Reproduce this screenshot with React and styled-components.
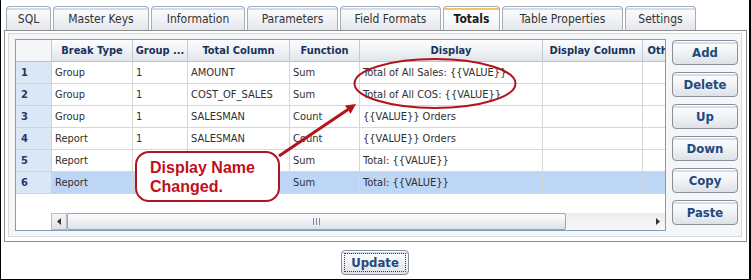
import React from 'react';
import styled, { createGlobalStyle } from 'styled-components';

const UI_FONT = `"DejaVu Sans Condensed", "DejaVu Sans", sans-serif`;

const GlobalStyle = createGlobalStyle`
  html, body {
    margin: 0;
    padding: 0;
    background: #fff;
  }
  body {
    font-family: ${UI_FONT};
    font-stretch: condensed;
  }
  * {
    box-sizing: border-box;
  }
`;

const Frame = styled.div`
  position: relative;
  width: 751px;
  height: 280px;
  border-left: 1px solid #000;
  border-right: 2px solid #000;
  border-bottom: 1px solid #000;
  display: flex;
  flex-direction: column;
  overflow: hidden;
`;

const TabBar = styled.div`
  display: flex;
  gap: 2px;
  height: 30px;
  padding: 6px 0 0 5px;
`;

const Tab = styled.div`
  width: ${(p) => p.$w}px;
  height: 24px;
  border: 1px solid #a3acb8;
  border-bottom: none;
  border-radius: 4px 4px 0 0;
  background: ${(p) =>
    p.$active
      ? 'linear-gradient(#fff 0 1px, #f3c564 1px 3px, #fefefe 3px, #fafbfc 50%, #eef0f3 100%)'
      : 'linear-gradient(#fff 0 1px, #d2ddea 1px 3px, #fafbfc 3px, #f1f3f6 50%, #e3e6eb 100%)'};
  display: flex;
  align-items: center;
  justify-content: center;
  font-size: 12px;
  font-weight: ${(p) => (p.$active ? 700 : 400)};
  color: ${(p) => (p.$active ? '#1a1a1a' : '#333')};
  white-space: nowrap;
`;

const Panel = styled.div`
  height: 212px;
  margin: 0 2px 0 3px;
  border: 1px solid #8e8e8e;
  padding: 2px 4px 4px 3px;
  background: #fff;
`;

const Inner = styled.div`
  height: 100%;
  border: 1px solid #d6d8db;
  background: #f5f6f8;
  padding: 5px 3px 5px 6px;
  display: flex;
  gap: 6px;
`;

const GridBox = styled.div`
  width: 651px;
  border: 1px solid #7f9db9;
  background: #fff;
  display: flex;
  flex-direction: column;
  overflow: hidden;
`;

const Row = styled.div`
  display: grid;
  grid-template-columns: 36px 81px 55px 102px 70px 183px 100px 42px;
  height: 22px;
  flex: none;
  background: ${(p) => (p.$selected ? '#bed6f6' : '#fff')};
`;

const HeadCell = styled.div`
  border-right: 1px solid #c4cad3;
  border-bottom: 1px solid #b9c0ca;
  background: ${(p) =>
    p.$corner ? '#f4f6f9' : 'linear-gradient(#fdfdfe, #eef1f5 55%, #e0e5eb)'};
  color: #18335d;
  font-size: 11px;
  font-weight: 700;
  line-height: 21px;
  text-align: center;
  white-space: nowrap;
  overflow: hidden;
`;

const NumCell = styled.div`
  border-right: 1px solid #c9d5e4;
  border-bottom: 1px solid #c9d5e4;
  background: #dce7f6;
  color: #1c3a6a;
  font-size: 11px;
  font-weight: 700;
  line-height: 21px;
  padding-left: 5px;
`;

const Cell = styled.div`
  border-right: 1px solid #d6d6d6;
  border-bottom: 1px solid #d6d6d6;
  color: #2f2f2f;
  font-size: 11px;
  line-height: 21px;
  padding-left: 3px;
  white-space: nowrap;
  overflow: hidden;
`;

const Filler = styled.div`
  flex: 1;
`;

const HScroll = styled.div`
  display: flex;
  height: 17px;
  margin-left: 35px;
  flex: none;
  background: linear-gradient(#eceef1, #f6f7f8);
`;

const ScrollArrow = styled.div`
  width: ${(p) => p.$w}px;
  display: flex;
  align-items: center;
  justify-content: center;
  border: ${(p) => (p.$boxed ? '1px solid #b7bdc6' : 'none')};
  background: ${(p) => (p.$boxed ? 'linear-gradient(#f4f5f7, #dfe2e6)' : 'transparent')};
`;

const Thumb = styled.div`
  width: 499px;
  border: 1px solid #9ba4b0;
  border-radius: 2px;
  background: linear-gradient(#fdfdfe, #eef0f3 50%, #dde1e7);
  display: flex;
  align-items: center;
  justify-content: center;
  gap: 2px;
`;

const Grip = styled.span`
  width: 1px;
  height: 7px;
  background: #7e8896;
`;

const Track = styled.div`
  flex: 1;
`;

const SideButtons = styled.div`
  width: 66px;
  display: flex;
  flex-direction: column;
  gap: 7px;
  padding-top: 1px;
`;

const ActionButton = styled.button`
  width: ${(p) => p.$w || 66}px;
  height: 25px;
  padding: 0;
  border: 1px solid #8a9099;
  border-radius: 4px;
  background: linear-gradient(#fff 0 1px, #d5dfeb 1px 3px, #fbfcfd 3px, #f1f3f6 50%, #dde1e7 100%);
  font-family: ${UI_FONT};
  font-stretch: condensed;
  font-size: 13px;
  font-weight: 700;
  color: #1f4a80;
  cursor: pointer;
`;

const Footer = styled.div`
  display: flex;
  justify-content: center;
  padding-top: 8px;
`;

const UpdateButton = styled(ActionButton)`
  outline: 1px dotted #3b3b3b;
  outline-offset: -4px;
`;

const Overlay = styled.svg`
  position: absolute;
  left: -1px;
  top: 0;
  pointer-events: none;
`;

const Callout = styled.div`
  position: absolute;
  left: 134px;
  top: 151px;
  width: 145px;
  height: 51px;
  border: 2px solid #b3141c;
  border-radius: 14px;
  background: #fff;
  display: flex;
  align-items: center;
  padding-left: 13px;
  font-family: "Liberation Sans", Arial, sans-serif;
  font-stretch: normal;
  font-size: 16px;
  font-weight: 700;
  line-height: 19px;
  color: #c0101a;
`;

const tabs = [
  { label: 'SQL', w: 45 },
  { label: 'Master Keys', w: 96 },
  { label: 'Information', w: 94 },
  { label: 'Parameters', w: 91 },
  { label: 'Field Formats', w: 101 },
  { label: 'Totals', w: 57, active: true },
  { label: 'Table Properties', w: 121 },
  { label: 'Settings', w: 71 },
];

const columns = ['Break Type', 'Group ...', 'Total Column', 'Function', 'Display', 'Display Column', 'Other'];

// rows 5 and 6 sit behind the callout, so their group / total column cells stay blank
const rows = [
  ['Group', '1', 'AMOUNT', 'Sum', 'Total of All Sales: {{VALUE}}', ''],
  ['Group', '1', 'COST_OF_SALES', 'Sum', 'Total of All COS: {{VALUE}}', ''],
  ['Group', '1', 'SALESMAN', 'Count', '{{VALUE}} Orders', ''],
  ['Report', '1', 'SALESMAN', 'Count', '{{VALUE}} Orders', ''],
  ['Report', '', '', 'Sum', 'Total: {{VALUE}}', ''],
  ['Report', '', '', 'Sum', 'Total: {{VALUE}}', ''],
];

const buttons = ['Add', 'Delete', 'Up', 'Down', 'Copy', 'Paste'];

const App = () => {
  return (
    <>
      <GlobalStyle />
      <Frame>
        <TabBar>
          {tabs.map((t) => (
            <Tab key={t.label} $w={t.w} $active={t.active}>
              {t.label}
            </Tab>
          ))}
        </TabBar>

        <Panel>
          <Inner>
            <GridBox>
              <Row>
                <HeadCell $corner />
                {columns.map((c) => (
                  <HeadCell key={c}>{c}</HeadCell>
                ))}
              </Row>
              {rows.map((r, i) => (
                <Row key={i} $selected={i === 5}>
                  <NumCell>{i + 1}</NumCell>
                  {r.map((v, j) => (
                    <Cell key={j}>{v}</Cell>
                  ))}
                  <Cell />
                </Row>
              ))}
              <Filler />
              <HScroll>
                <ScrollArrow $w={16} $boxed>
                  <svg width="4" height="7" viewBox="0 0 4 7">
                    <path d="M4 0 L0 3.5 L4 7 Z" fill="#333" />
                  </svg>
                </ScrollArrow>
                <Thumb>
                  <Grip />
                  <Grip />
                  <Grip />
                </Thumb>
                <Track />
                <ScrollArrow $w={14}>
                  <svg width="4" height="7" viewBox="0 0 4 7">
                    <path d="M0 0 L4 3.5 L0 7 Z" fill="#333" />
                  </svg>
                </ScrollArrow>
              </HScroll>
            </GridBox>

            <SideButtons>
              {buttons.map((b) => (
                <ActionButton key={b}>{b}</ActionButton>
              ))}
            </SideButtons>
          </Inner>
        </Panel>

        <Footer>
          <UpdateButton $w={68}>Update</UpdateButton>
        </Footer>

        <Overlay width="751" height="280" viewBox="0 0 751 280">
          <ellipse cx="435" cy="83.5" rx="80.5" ry="24.5" fill="none" stroke="#b3141c" strokeWidth="2" />
          <line x1="279" y1="156" x2="348" y2="109.5" stroke="#b3141c" strokeWidth="3" />
          <polygon points="356,104 350.6,113.8 345,105.6" fill="#b3141c" />
        </Overlay>

        <Callout>
          Display Name
          <br />
          Changed.
        </Callout>
      </Frame>
    </>
  );
};

export default App;
